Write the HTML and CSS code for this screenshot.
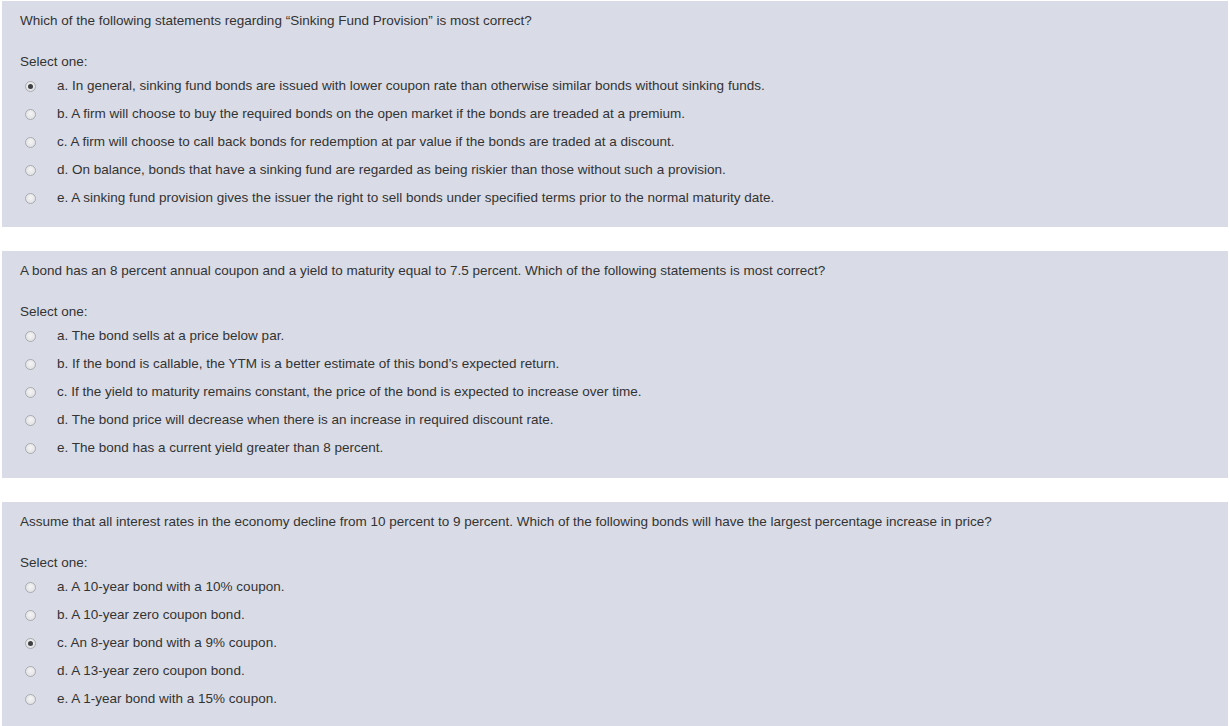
FILE: index.html
```html
<!DOCTYPE html>
<html>
<head>
<meta charset="utf-8">
<link rel="stylesheet" href="styles.css">
</head>
<body>
<div class="page">
  <div class="que">
    <div class="qtext">Which of the following statements regarding “Sinking Fund Provision” is most correct?</div>
    <div class="prompt">Select one:</div>
    <div class="answer">
      <div class="opt"><span class="radio checked"></span><span class="label">a. In general, sinking fund bonds are issued with lower coupon rate than otherwise similar bonds without sinking funds.</span></div>
      <div class="opt"><span class="radio"></span><span class="label">b. A firm will choose to buy the required bonds on the open market if the bonds are treaded at a premium.</span></div>
      <div class="opt"><span class="radio"></span><span class="label">c. A firm will choose to call back bonds for redemption at par value if the bonds are traded at a discount.</span></div>
      <div class="opt"><span class="radio"></span><span class="label">d. On balance, bonds that have a sinking fund are regarded as being riskier than those without such a provision.</span></div>
      <div class="opt"><span class="radio"></span><span class="label">e. A sinking fund provision gives the issuer the right to sell bonds under specified terms prior to the normal maturity date.</span></div>
    </div>
  </div>
  <div class="que tall">
    <div class="qtext">A bond has an 8 percent annual coupon and a yield to maturity equal to 7.5 percent. Which of the following statements is most correct?</div>
    <div class="prompt">Select one:</div>
    <div class="answer">
      <div class="opt"><span class="radio"></span><span class="label">a. The bond sells at a price below par.</span></div>
      <div class="opt"><span class="radio"></span><span class="label">b. If the bond is callable, the YTM is a better estimate of this bond’s expected return.</span></div>
      <div class="opt"><span class="radio"></span><span class="label">c. If the yield to maturity remains constant, the price of the bond is expected to increase over time.</span></div>
      <div class="opt"><span class="radio"></span><span class="label">d. The bond price will decrease when there is an increase in required discount rate.</span></div>
      <div class="opt"><span class="radio"></span><span class="label">e. The bond has a current yield greater than 8 percent.</span></div>
    </div>
  </div>
  <div class="que">
    <div class="qtext">Assume that all interest rates in the economy decline from 10 percent to 9 percent. Which of the following bonds will have the largest percentage increase in price?</div>
    <div class="prompt">Select one:</div>
    <div class="answer">
      <div class="opt"><span class="radio"></span><span class="label">a. A 10-year bond with a 10% coupon.</span></div>
      <div class="opt"><span class="radio"></span><span class="label">b. A 10-year zero coupon bond.</span></div>
      <div class="opt"><span class="radio checked"></span><span class="label">c. An 8-year bond with a 9% coupon.</span></div>
      <div class="opt"><span class="radio"></span><span class="label">d. A 13-year zero coupon bond.</span></div>
      <div class="opt"><span class="radio"></span><span class="label">e. A 1-year bond with a 15% coupon.</span></div>
    </div>
  </div>
</div>
</body>
</html>
```
FILE: styles.css
```css
html, body {
  margin: 0;
  padding: 0;
  background: #ffffff;
}
body {
  font-family: "Liberation Sans", Arial, sans-serif;
  font-size: 13.5px;
  color: #333333;
}
.page {
  display: flex;
  flex-direction: column;
  gap: 24px;
  padding: 1px 1px 0 2px;
}
.que {
  background: #d9dce6;
  padding: 11px 18px 15px 18px;
  height: 226px;
  box-sizing: border-box;
}
.que.tall {
  height: 227px;
}
.qtext {
  line-height: 18px;
}
.prompt {
  line-height: 18px;
  margin-top: 23px;
}
.answer {
  margin-top: 1px;
}
.opt {
  display: flex;
  align-items: center;
  height: 28px;
}
.radio {
  width: 9px;
  height: 9px;
  border-radius: 50%;
  border: 1px solid #a9abb0;
  background: radial-gradient(circle at 50% 40%, #f4f4f5 0%, #dcdde0 100%);
  margin-left: 5px;
  position: relative;
  flex: none;
}
.radio.checked::after {
  content: "";
  position: absolute;
  left: 2px;
  top: 2px;
  width: 5px;
  height: 5px;
  border-radius: 50%;
  background: #3e3f42;
}
.label {
  margin-left: 21px;
  line-height: 18px;
}
```
